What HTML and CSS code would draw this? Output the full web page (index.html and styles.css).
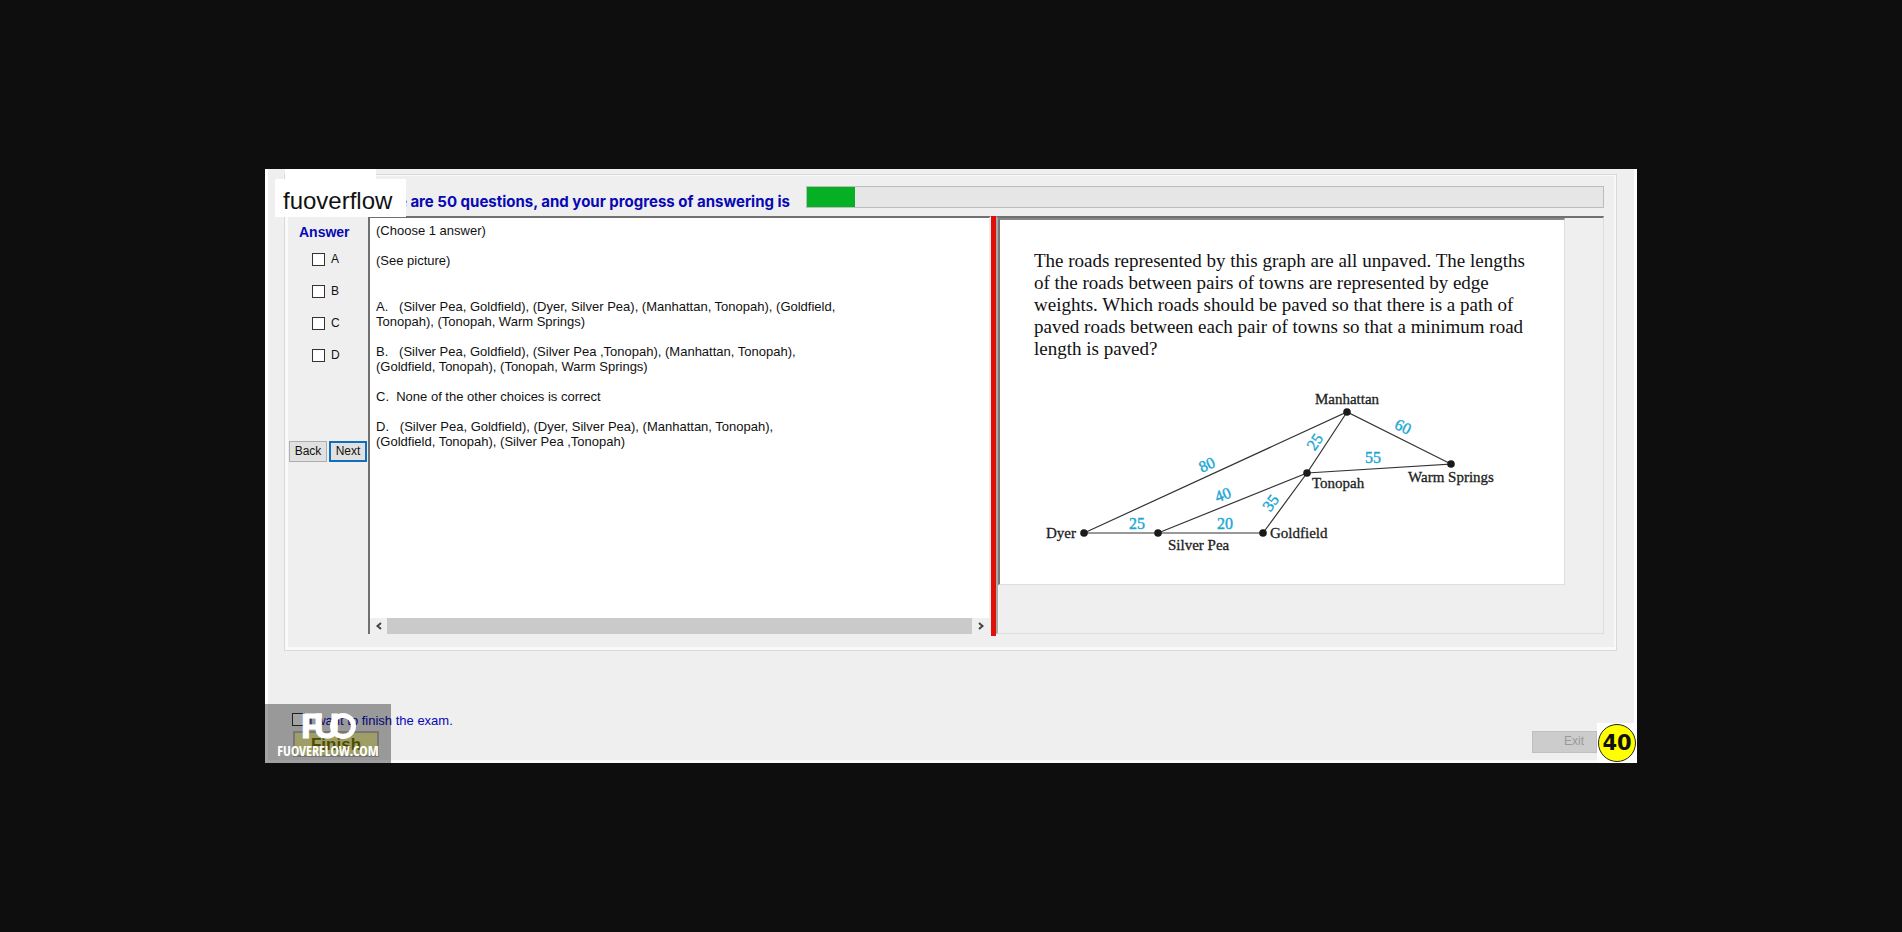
FILE: index.html
```html
<!DOCTYPE html>
<html lang="en">
<head>
<meta charset="utf-8">
<title>Exam</title>
<link rel="stylesheet" href="styles.css">
</head>
<body>
<main class="window">
  <div class="brand">fuoverflow</div>
  <section class="group">
    <div class="tab"></div>
    <header class="status">
      <label class="status-text" for="progress">There are 50 questions, and your progress of answering is</label>
      <progress class="progress" id="progress" max="50" value="3"></progress>
    </header>
    <div class="panes">
      <form class="answers">
        <h2 class="answers-title">Answer</h2>
        <label class="choice"><input class="box" type="checkbox">A</label>
        <label class="choice"><input class="box" type="checkbox">B</label>
        <label class="choice"><input class="box" type="checkbox">C</label>
        <label class="choice"><input class="box" type="checkbox">D</label>
        <div class="nav">
          <button class="button" type="button">Back</button>
          <button class="button button-focus" type="button">Next</button>
        </div>
      </form>
      <section class="question">
        <div class="question-text">(Choose 1 answer)

(See picture)

<p class="options">A.   (Silver Pea, Goldfield), (Dyer, Silver Pea), (Manhattan, Tonopah), (Goldfield,
Tonopah), (Tonopah, Warm Springs)

B.   (Silver Pea, Goldfield), (Silver Pea ,Tonopah), (Manhattan, Tonopah),
(Goldfield, Tonopah), (Tonopah, Warm Springs)

C.  None of the other choices is correct

D.   (Silver Pea, Goldfield), (Dyer, Silver Pea), (Manhattan, Tonopah),
(Goldfield, Tonopah), (Silver Pea ,Tonopah)</p></div>
        <div class="scrollbar">
          <button class="arrow" type="button" aria-label="Scroll left"><svg width="8" height="8" viewBox="0 0 8 8"><path d="M6 1 2.500 4 6 7" fill="none" stroke="#444" stroke-width="2"/></svg></button>
          <div class="thumb"></div>
          <button class="arrow" type="button" aria-label="Scroll right"><svg width="8" height="8" viewBox="0 0 8 8"><path d="M2 1 5.500 4 2 7" fill="none" stroke="#444" stroke-width="2"/></svg></button>
        </div>
      </section>
      <div class="splitter"></div>
      <section class="viewer">
        <figure class="picture">
          <p class="problem">The roads represented by this graph are all unpaved. The lengths<br>of the roads between pairs of towns are represented by edge<br>weights. Which roads should be paved so that there is a path of<br>paved roads between each pair of towns so that a minimum road<br>length is paved?</p>
          <svg class="graph" viewBox="0 0 500 180">
            <g stroke="#333" stroke-width="1.200">
              <path fill="none" d="M64 153 327 32 431 84 287 93 243 153H64M327 32 287 93 138 153"/>
            </g>
            <g fill="#1a1a1a">
              <circle cx="64" cy="153" r="3.800"/><circle cx="138" cy="153" r="3.800"/><circle cx="243" cy="153" r="3.800"/>
              <circle cx="287" cy="93" r="3.800"/><circle cx="327" cy="32" r="3.800"/><circle cx="431" cy="84" r="3.800"/>
            </g>
            <g class="town">
              <text x="327" y="24" text-anchor="middle">Manhattan</text>
              <text x="292" y="108">Tonopah</text>
              <text x="431" y="102" text-anchor="middle">Warm Springs</text>
              <text x="26" y="158">Dyer</text>
              <text x="148" y="170">Silver Pea</text>
              <text x="250" y="158">Goldfield</text>
            </g>
            <g class="weight">
              <text transform="translate(187 85) rotate(-24)" y="5">80</text>
              <text transform="translate(203 115) rotate(-21)" y="5">40</text>
              <text transform="translate(295 62) rotate(-56)" y="5">25</text>
              <text transform="translate(251 123) rotate(-54)" y="5">35</text>
              <text transform="translate(383 47) rotate(26)" y="5">60</text>
              <text x="353" y="83">55</text>
              <text x="117" y="149">25</text>
              <text x="205" y="149">20</text>
            </g>
          </svg>
        </figure>
      </section>
    </div>
  </section>
  <footer class="footer">
    <div class="finish">
      <label class="finish-label"><input class="box" type="checkbox">I want to finish the exam.</label>
      <button class="finish-button" type="button">Finish</button>
    </div>
    <div class="leave">
      <button class="exit" type="button" disabled>Exit</button>
      <div class="badge-tile"><span class="badge">40</span></div>
    </div>
  </footer>
  <div class="watermark">
    <svg class="logo" width="56" height="30" viewBox="0 0 56 30">
      <text x="1" y="28">F</text><text x="14" y="28">U</text>
      <circle cx="43" cy="16" r="10.500" fill="none" stroke="#fff" stroke-width="5"/>
    </svg>
    <span class="watermark-name">FUOVERFLOW.COM</span>
  </div>
</main>
</body>
</html>
```

FILE: styles.css
```css
* { box-sizing: border-box; }

body {
  margin: 0;
  min-height: 100vh;
  padding: 0 265px;
  display: flex;
  align-items: center;
  background: #0e0e0e;
  color: #111;
  font: 13px/15px "Liberation Sans", Arial, sans-serif;
}

button { font: inherit; padding: 0; }

.window {
  position: relative;
  flex: 1;
  min-width: 0;
  padding: 5px 20px 3px 19px;
  background: #efefef;
  box-shadow: inset 3px 0 #fff, inset -3px 0 #fff, inset 0 -3px #fafafa;
}

.brand {
  position: absolute;
  left: 10px;
  top: 10px;
  padding: 8px 8px 2px;
  width: 131px;
  background: #fff;
  color: #111;
  font: 24px/28px "Liberation Sans", Arial, sans-serif;
  z-index: 2;
}

.group {
  position: relative;
  border: 1px solid #d9d9d9;
  box-shadow: inset 3px 0 #fafafa, inset 0 1px #fafafa, inset 0 -3px #fafafa, inset -2px 0 #f8f8f8;
  padding: 0 12px 14px 3px;
}

.tab {
  position: absolute;
  left: 0;
  top: -6px;
  width: 91px;
  height: 12px;
  background: #fff;
}

.status {
  display: grid;
  grid-template-columns: 518px 1fr;
  padding: 11px 0 8px;
}

.status-text {
  padding: 8px 16px 0 0;
  display: flex;
  justify-content: flex-end;
  height: 22px;
  white-space: nowrap;
  color: #0808b4;
  font: 700 15px/15px Inter, "Liberation Sans", sans-serif;
}

.progress {
  appearance: none;
  width: 100%;
  height: 22px;
  border: 1px solid #bcbcbc;
  background: #e6e6e6;
}
.progress::-webkit-progress-bar { background: #e6e6e6; }
.progress::-webkit-progress-value { background: #06b025; }

.panes {
  display: grid;
  grid-template-columns: 80px 623fr 5px 608fr;
  min-height: 420px;
}

.answers {
  display: flex;
  flex-direction: column;
  padding: 8px 1px 0 0;
}

.answers-title {
  margin: 0 0 13px 11px;
  color: #0808b4;
  font-size: 14px;
  line-height: 16px;
}

.box {
  appearance: none;
  width: 13px;
  height: 13px;
  margin: 0;
  border: 1px solid #333;
  background: #fff;
}

.choice {
  display: flex;
  align-items: center;
  gap: 6px;
  height: 13px;
  margin: 0 0 19px 24px;
  font-size: 12px;
}

.nav {
  display: grid;
  grid-template-columns: 1fr 1fr;
  gap: 2px;
  margin-top: 60px;
  padding-left: 1px;
}

.button {
  height: 21px;
  border: 1px solid #adadad;
  background: #e1e1e1;
  color: #111;
  font-size: 12px;
}
.button-focus { border: 2px solid #0f6fbd; }

.question {
  display: flex;
  flex-direction: column;
  margin-bottom: 2px;
  border-top: 2px solid #707070;
  border-left: 2px solid #707070;
  background: #fff;
  border-right: 2px solid #efefef;
}

.question-text {
  flex: 1;
  padding: 5px 6px;
  white-space: pre;
}

.options { margin: 0; padding-top: 16px; }

.scrollbar {
  display: flex;
  height: 16px;
  background: #efefef;
}

.arrow {
  display: flex;
  align-items: center;
  justify-content: center;
  width: 17px;
  border: 0;
  background: none;
}

.thumb { flex: 1; background: #cacaca; }

.splitter { background: #df1008; }

.viewer {
  margin-bottom: 2px;
  border: 1px solid #dedede;
  border-top: 2px solid #707070;
  border-left: 2px solid #aaa;
  padding-right: 38px;
}

.picture {
  margin: 0;
  padding: 30px 0 24px 34px;
  border: 1px solid #dedede;
  border-top: 2px solid #888;
  border-left: 2px solid #777;
  background: #fff;
}

.problem {
  margin: 0 0 20px;
  font: 19px/22px "Liberation Serif", "Times New Roman", serif;
  white-space: nowrap;
}

.graph {
  display: block;
  width: 500px;
  max-width: 100%;
  margin-left: -14px;
  font-family: "Liberation Serif", "Times New Roman", serif;
  font-size: 15px;
}
.town { fill: #222; stroke: #222; stroke-width: 0.3px; }
.weight { fill: #1ba7d4; stroke: #1ba7d4; stroke-width: 0.4px; text-anchor: middle; font-size: 16px; }

.footer {
  display: flex;
  justify-content: space-between;
  align-items: flex-end;
  height: 109px;
}

.finish { padding: 0 0 3px 9px; }

.finish-label {
  display: flex;
  gap: 4px;
  margin: 0 0 3px -1px;
  color: #0808b4;
}

.finish-button {
  width: 86px;
  height: 26px;
  border: 2px solid #bbb;
  background: #f8f8a0;
  color: #777700;
  font-weight: bold;
  font-size: 17px;
}

.leave {
  display: flex;
  align-items: center;
  margin-right: -20px;
}

.exit {
  width: 65px;
  height: 22px;
  padding-left: 19px;
  border: 1px solid #bfbfbf;
  background: #cccccc;
  color: #999;
  font-size: 12px;
}

.badge-tile {
  padding: 1px;
  margin-bottom: -3px;
  background: #fff;
}

.badge {
  display: block;
  width: 38px;
  height: 38px;
  border: 1px solid #222;
  border-radius: 50%;
  background: #ffff00;
  color: #111;
  text-align: center;
  font: bold 21px/36px "DejaVu Sans", sans-serif;
}

.watermark {
  position: absolute;
  left: 0;
  bottom: 0;
  width: 126px;
  height: 59px;
  padding-top: 6px;
  display: flex;
  flex-direction: column;
  align-items: center;
  background: rgba(0, 0, 0, 0.36);
  color: #fff;
}

.logo {
  fill: #fff;
  stroke: #fff;
  font: bold 35px "Liberation Sans", sans-serif;
}

.watermark-name {
  margin-top: 3px;
  font: bold 14px/16px "Liberation Sans Narrow", "Open Sans Condensed", "DejaVu Sans Condensed", sans-serif;
}
```
